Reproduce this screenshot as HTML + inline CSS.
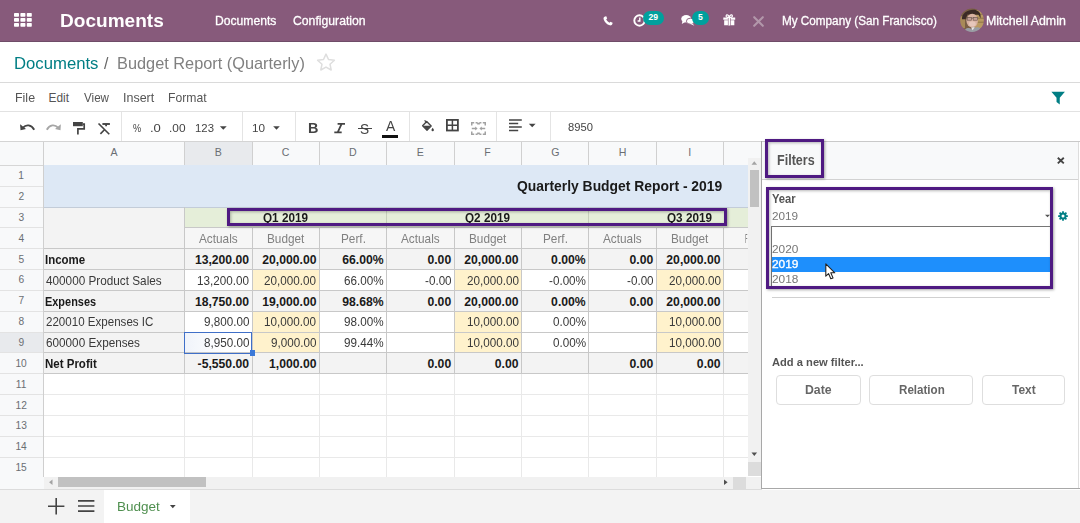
<!DOCTYPE html>
<html><head><meta charset="utf-8"><title>Documents</title>
<style>
*{box-sizing:border-box;margin:0;padding:0}
html,body{width:1080px;height:523px;overflow:hidden;background:#fff;font-family:"Liberation Sans",sans-serif;}
body{position:relative}
.a{position:absolute}
.t{position:absolute;white-space:nowrap;line-height:1;transform-origin:0 0}
.hl{position:absolute;border:3px solid #4f1a82;box-shadow:1px 1px 2.5px rgba(0,0,0,.35), inset 1px 1px 3px rgba(0,0,0,.28)}
svg{position:absolute;overflow:visible}
</style></head><body>

<div class="a" style="left:0.00px;top:0.00px;width:1080.00px;height:42.00px;background:#875a7b;"></div>
<div class="a" style="left:0.00px;top:41.00px;width:1080.00px;height:1.00px;background:#6f4c68;"></div>
<svg style="left:14px;top:13px" width="18" height="14" viewBox="0 0 18 14"><g fill="#fff">
<rect x="0" y="0" width="5" height="3.8" rx=".7"/><rect x="6.4" y="0" width="5" height="3.8" rx=".7"/><rect x="12.8" y="0" width="5" height="3.8" rx=".7"/>
<rect x="0" y="5" width="5" height="3.8" rx=".7"/><rect x="6.4" y="5" width="5" height="3.8" rx=".7"/><rect x="12.8" y="5" width="5" height="3.8" rx=".7"/>
<rect x="0" y="10" width="5" height="3.8" rx=".7"/><rect x="6.4" y="10" width="5" height="3.8" rx=".7"/><rect x="12.8" y="10" width="5" height="3.8" rx=".7"/></g></svg>
<div class="t" style="left:59.96px;top:12.00px;font-size:18.60px;color:#fff;font-weight:bold;transform:scaleX(1.0249);">Documents</div>
<div class="t" style="left:214.50px;top:15.00px;font-size:12.50px;color:#fff;transform:scaleX(0.9717);-webkit-text-stroke:0.3px #fff;">Documents</div>
<div class="t" style="left:293.14px;top:15.00px;font-size:12.50px;color:#fff;transform:scaleX(0.9769);-webkit-text-stroke:0.3px #fff;">Configuration</div>
<div class="t" style="left:781.53px;top:15.00px;font-size:12.50px;color:#fff;transform:scaleX(0.9371);-webkit-text-stroke:0.3px #fff;">My Company (San Francisco)</div>
<div class="t" style="left:985.98px;top:15.00px;font-size:12.50px;color:#fff;transform:scaleX(0.9905);-webkit-text-stroke:0.3px #fff;">Mitchell Admin</div>
<svg style="left:603px;top:15.5px" width="10" height="10" viewBox="0 0 11 11"><path d="M2.2 0.6 L3.6 0.3 L4.6 2.8 L3.5 3.7 C4.1 5.2 5.6 6.8 7.2 7.5 L8.1 6.4 L10.6 7.4 L10.3 8.9 C9.9 10.2 8.6 10.6 7.4 10.2 C4.2 9.2 1.6 6.6 0.7 3.5 C0.3 2.2 0.9 1 2.2 0.6Z" fill="#fff"/></svg>
<svg style="left:633px;top:13.5px" width="13" height="13" viewBox="0 0 13 13"><circle cx="6.5" cy="6.5" r="5.2" fill="none" stroke="#fff" stroke-width="1.9"/><path d="M6.8 3.6 V7 H4.6" fill="none" stroke="#fff" stroke-width="1.4"/></svg>
<div class="a" style="left:642.5px;top:11px;width:21.5px;height:13.5px;border-radius:7px;background:#00a09d"></div>
<div class="t" style="left:648.53px;top:13.00px;font-size:8.60px;color:#fff;font-weight:bold;">29</div>
<svg style="left:681px;top:15px" width="14" height="11" viewBox="0 0 14 11"><ellipse cx="5.2" cy="3.8" rx="5" ry="3.7" fill="#fff"/><path d="M1.6 5.6 L0.8 9 L4.6 6.8Z" fill="#fff"/><ellipse cx="9.4" cy="6.2" rx="4" ry="3" fill="#fff" stroke="#875a7b" stroke-width=".9"/><path d="M11 8 L13.4 10.8 L9 8.8Z" fill="#fff"/></svg>
<div class="a" style="left:691.8px;top:11px;width:17.4px;height:13.5px;border-radius:7px;background:#00a09d"></div>
<div class="t" style="left:698.09px;top:13.00px;font-size:8.60px;color:#fff;font-weight:bold;">5</div>
<svg style="left:722.5px;top:14px" width="12.5" height="11.5" viewBox="0 0 13 12"><path d="M0.3 3.6 H12.7 V6 H0.3Z M1.2 6.6 H11.8 V11.8 H1.2Z" fill="#fff"/><rect x="5.1" y="3.4" width="2.8" height="8.6" fill="#875a7b"/><rect x="5.7" y="3.4" width="1.6" height="8.6" fill="#fff"/><path d="M6.5 3.6 C4 3.6 2.8 2.8 3.3 1.5 C4 0.2 6 1.2 6.5 3.6 C7 1.2 9 0.2 9.7 1.5 C10.2 2.8 9 3.6 6.5 3.6Z" fill="none" stroke="#fff" stroke-width="1.2"/></svg>
<svg style="left:753px;top:16px" width="11" height="11" viewBox="0 0 11 11"><path d="M1.2 1.2 L9.8 9.8 M9.8 1.2 L1.2 9.8" stroke="#b297aa" stroke-width="2.1" stroke-linecap="round"/></svg>
<svg style="left:960px;top:8px" width="24" height="24.4" viewBox="0 0 24 24"><defs><clipPath id="av"><circle cx="12" cy="12" r="11.8"/></clipPath><filter id="bl" x="-20%" y="-20%" width="140%" height="140%"><feGaussianBlur stdDeviation="0.7"/></filter></defs><g clip-path="url(#av)"><g filter="url(#bl)">
<rect x="-2" y="-2" width="28" height="28" fill="#7a5f45"/>
<rect x="15" y="2" width="11" height="18" fill="#b99a62"/><rect x="-2" y="8" width="7" height="12" fill="#a88a58"/>
<path d="M15 6 H26 M15 10 H26 M15 14 H26" stroke="#8f7447" stroke-width="1"/>
<path d="M2 11 C1 0 23 -3 20.5 10 L18.5 6.6 L7.4 6.2 L5.6 11Z" fill="#3a2c27"/>
<ellipse cx="12.2" cy="12.4" rx="5.8" ry="6.8" fill="#d8b2a2"/>
<ellipse cx="12.4" cy="15.6" rx="3.4" ry="2.6" fill="#e6c7bb"/>
<path d="M6.6 9.9 H17.8" stroke="#6a5550" stroke-width="0.8"/>
<rect x="7.2" y="9.4" width="4.2" height="2.6" fill="#c3a095" stroke="#6a5550" stroke-width=".6"/><rect x="13.2" y="9.4" width="4.2" height="2.6" fill="#c3a095" stroke="#6a5550" stroke-width=".6"/>
<path d="M4 25 C5 18 9.5 19.4 12.4 21 C15 18.6 21 17 23 25Z" fill="#9a9da4"/>
<path d="M11 19.4 L12.6 22 L15 18.8Z" fill="#e8e8ea"/>
</g></g></svg>
<div class="a" style="left:0.00px;top:82.00px;width:1080.00px;height:1.00px;background:#dadada;"></div>
<div class="t" style="left:14.12px;top:55.00px;font-size:17.00px;color:#017e84;transform:scaleX(0.9824);">Documents</div>
<div class="t" style="left:104.00px;top:55.00px;font-size:17.00px;color:#666;transform:scaleX(0.9327);">/</div>
<div class="t" style="left:116.65px;top:55.00px;font-size:17.00px;color:#808080;transform:scaleX(0.9603);">Budget Report (Quarterly)</div>
<svg style="left:316.4px;top:51.6px" width="20" height="20" viewBox="0 0 20 19"><path d="M10 1.6 L12.5 7 L18.4 7.7 L14 11.7 L15.2 17.5 L10 14.6 L4.8 17.5 L6 11.7 L1.6 7.7 L7.5 7Z" fill="none" stroke="#dedede" stroke-width="1.5" stroke-linejoin="round"/></svg>
<div class="a" style="left:0.00px;top:111.00px;width:1080.00px;height:1.00px;background:#e2e2e2;"></div>
<div class="t" style="left:15.47px;top:93.00px;font-size:11.90px;color:#555;transform:scaleX(1.0469);">File</div>
<div class="t" style="left:48.51px;top:93.00px;font-size:11.90px;color:#555;">Edit</div>
<div class="t" style="left:84.19px;top:93.00px;font-size:11.90px;color:#555;transform:scaleX(0.9783);">View</div>
<div class="t" style="left:123.09px;top:93.00px;font-size:11.90px;color:#555;transform:scaleX(1.0504);">Insert</div>
<div class="t" style="left:168.24px;top:93.00px;font-size:11.90px;color:#555;transform:scaleX(1.0240);">Format</div>
<svg style="left:1051.2px;top:91.2px" width="14.3" height="14.2" viewBox="0 0 15 14"><path d="M0.4 0.3 H14.6 L9.2 6.6 V13.7 L5.8 11.2 V6.6Z" fill="#017e84"/></svg>
<div class="a" style="left:0.00px;top:140.50px;width:1080.00px;height:1.00px;background:#d4d4d4;"></div>
<div class="a" style="left:121.20px;top:112.00px;width:1.00px;height:29.00px;background:#e4e4e4;"></div>
<div class="a" style="left:241.50px;top:112.00px;width:1.00px;height:29.00px;background:#e4e4e4;"></div>
<div class="a" style="left:294.50px;top:112.00px;width:1.00px;height:29.00px;background:#e4e4e4;"></div>
<div class="a" style="left:408.70px;top:112.00px;width:1.00px;height:29.00px;background:#e4e4e4;"></div>
<div class="a" style="left:496.20px;top:112.00px;width:1.00px;height:29.00px;background:#e4e4e4;"></div>
<div class="a" style="left:549.50px;top:112.00px;width:1.00px;height:29.00px;background:#e4e4e4;"></div>
<svg style="left:19.6px;top:124.4px" width="15" height="6.8" viewBox="0 0 15 6.8"><path d="M3 3.6 C6 0.2 11.4 0.4 14.2 5.8" fill="none" stroke="#444" stroke-width="1.9"/><path d="M0.1 0.2 L0.5 6.2 L6 5Z" fill="#444"/></svg>
<svg style="left:46px;top:124.4px" width="15" height="6.8" viewBox="0 0 15 6.8"><path d="M12 3.6 C9 0.2 3.6 0.4 0.8 5.8" fill="none" stroke="#a6a6a6" stroke-width="1.9"/><path d="M14.9 0.2 L14.5 6.2 L9 5Z" fill="#a6a6a6"/></svg>
<svg style="left:73px;top:121.6px" width="12" height="12.6" viewBox="0 0 12 12.6"><rect x="0" y="0" width="9.8" height="4.2" fill="#444"/><path d="M9.8 2.1 H11.2 V6.8 H4.9 V12.4" fill="none" stroke="#444" stroke-width="1.7"/></svg>
<svg style="left:97.6px;top:122.6px" width="12.5" height="11.6" viewBox="0 0 12.5 11.6"><path d="M4.4 1 H11.9" stroke="#444" stroke-width="1.9"/><path d="M8.1 1 V3.2" stroke="#444" stroke-width="1.8"/><path d="M0.5 0.5 L11.3 11.3 M2.4 10.9 L6.9 6.2" fill="none" stroke="#444" stroke-width="1.6"/></svg>
<div class="t" style="left:132.98px;top:123.00px;font-size:11.00px;color:#444;transform:scaleX(0.8315);">%</div>
<div class="t" style="left:149.63px;top:123.00px;font-size:11.30px;color:#444;transform:scaleX(1.1548);">.0</div>
<div class="t" style="left:168.93px;top:123.00px;font-size:11.30px;color:#444;transform:scaleX(1.0514);">.00</div>
<div class="t" style="left:195.35px;top:123.00px;font-size:11.30px;color:#444;transform:scaleX(1.0049);">123</div>
<svg class="a" style="left:0;top:0" width="1080" height="523"><polygon points="219.9,126.3 226.70000000000002,126.3 223.3,129.7" fill="#444"/></svg>
<div class="t" style="left:252.12px;top:123.00px;font-size:11.30px;color:#444;transform:scaleX(1.0380);">10</div>
<svg class="a" style="left:0;top:0" width="1080" height="523"><polygon points="273.2,126.3 279.8,126.3 276.5,129.7" fill="#444"/></svg>
<div class="t" style="left:307.73px;top:121.00px;font-size:14.60px;color:#444;font-weight:bold;transform:scaleX(0.9881);">B</div>
<svg style="left:333.7px;top:122.7px" width="11.3" height="10.3" viewBox="0 0 11.3 10.3"><path d="M3.6 0.9 H11 M0.3 9.4 H7.7 M7.6 0.9 L3.7 9.4" stroke="#444" stroke-width="1.8" fill="none"/></svg>
<div class="t" style="left:360.18px;top:121.00px;font-size:15.20px;color:#444;transform:scaleX(0.9000);">S</div>
<div class="a" style="left:358.30px;top:127.60px;width:13.40px;height:1.40px;background:#444;"></div>
<div class="t" style="left:385.77px;top:119.00px;font-size:14.60px;color:#444;transform:scaleX(0.9512);">A</div>
<div class="a" style="left:382.20px;top:134.70px;width:15.80px;height:3.30px;background:#111;"></div>
<svg style="left:421.5px;top:120.3px" width="12" height="11.2" viewBox="0 0 12 11.2"><path d="M4.7 1.5 L9.2 6 L5 10.2 L0.6 5.8Z" fill="#f4f4f4" stroke="#444" stroke-width="1.3" stroke-linejoin="round"/><path d="M1.2 5.8 H8.8 L5 9.8Z" fill="#444"/><path d="M2.6 0.4 L4.9 2.7" stroke="#444" stroke-width="1.3"/><path d="M10.7 7.8 C11.4 8.8 11.9 9.4 11.9 10 A1.2 1.2 0 0 1 9.5 10 C9.5 9.4 10 8.8 10.7 7.8Z" fill="#444"/></svg>
<svg style="left:446.2px;top:119.3px" width="12.8" height="12.4" viewBox="0 0 12.8 12.4"><rect x="0.9" y="0.9" width="11" height="10.6" fill="none" stroke="#444" stroke-width="1.8"/><path d="M6.4 0.9 V11.5 M0.9 6.2 H11.9" stroke="#444" stroke-width="1.5"/></svg>
<svg style="left:470.8px;top:121.7px" width="15" height="13" viewBox="0 0 15 13"><g fill="none" stroke="#a2a2a2" stroke-width="1.5"><path d="M0.75 3.4 V0.75 H3.2 M4.6 0.75 H6.6 M8.4 0.75 H10.4 M11.8 0.75 H14.25 V3.4 M0.75 9.6 V12.25 H3.2 M4.6 12.25 H6.6 M8.4 12.25 H10.4 M11.8 12.25 H14.25 V9.6 M6.9 0.75 V2.6 M8.1 0.75 V2.6 M6.9 12.25 V10.4 M8.1 12.25 V10.4"/><path d="M0.8 6.5 H5.4 M9.6 6.5 H14.2"/></g><path d="M4.2 4.5 L6.6 6.5 L4.2 8.5Z M10.8 4.5 L8.4 6.5 L10.8 8.5Z" fill="#a2a2a2"/></svg>
<svg style="left:509.2px;top:119.3px" width="12.8" height="12.6" viewBox="0 0 12.8 12.6"><path d="M0 1 H12.8 M0 4.5 H9.2 M0 8 H12.8 M0 11.5 H9.2" stroke="#444" stroke-width="1.7"/></svg>
<svg class="a" style="left:0;top:0" width="1080" height="523"><polygon points="528.8000000000001,123.8 535.6,123.8 532.2,127.2" fill="#444"/></svg>
<div class="t" style="left:567.52px;top:122.00px;font-size:10.90px;color:#444;transform:scaleX(1.0277);">8950</div>
<div class="a" style="left:0.00px;top:141.50px;width:761.00px;height:23.80px;background:#f8f9fa;"></div>
<div class="a" style="left:0.00px;top:165.30px;width:43.50px;height:311.40px;background:#f8f9fa;"></div>
<div class="a" style="left:184.70px;top:141.50px;width:67.35px;height:23.80px;background:#e8eaed;"></div>
<div class="a" style="left:0.00px;top:332.10px;width:43.50px;height:20.85px;background:#e8eaed;"></div>
<div class="a" style="left:43.00px;top:141.50px;width:1.00px;height:23.80px;background:#d0d0d0;"></div>
<div class="a" style="left:184.20px;top:141.50px;width:1.00px;height:23.80px;background:#d0d0d0;"></div>
<div class="a" style="left:251.55px;top:141.50px;width:1.00px;height:23.80px;background:#d0d0d0;"></div>
<div class="a" style="left:318.90px;top:141.50px;width:1.00px;height:23.80px;background:#d0d0d0;"></div>
<div class="a" style="left:386.25px;top:141.50px;width:1.00px;height:23.80px;background:#d0d0d0;"></div>
<div class="a" style="left:453.60px;top:141.50px;width:1.00px;height:23.80px;background:#d0d0d0;"></div>
<div class="a" style="left:520.95px;top:141.50px;width:1.00px;height:23.80px;background:#d0d0d0;"></div>
<div class="a" style="left:588.30px;top:141.50px;width:1.00px;height:23.80px;background:#d0d0d0;"></div>
<div class="a" style="left:655.65px;top:141.50px;width:1.00px;height:23.80px;background:#d0d0d0;"></div>
<div class="a" style="left:723.00px;top:141.50px;width:1.00px;height:23.80px;background:#d0d0d0;"></div>
<div class="a" style="left:790.35px;top:141.50px;width:1.00px;height:23.80px;background:#d0d0d0;"></div>
<div class="a" style="left:0.00px;top:185.65px;width:43.50px;height:1.00px;background:#e3e3e3;"></div>
<div class="a" style="left:0.00px;top:206.50px;width:43.50px;height:1.00px;background:#e3e3e3;"></div>
<div class="a" style="left:0.00px;top:227.35px;width:43.50px;height:1.00px;background:#e3e3e3;"></div>
<div class="a" style="left:0.00px;top:248.20px;width:43.50px;height:1.00px;background:#e3e3e3;"></div>
<div class="a" style="left:0.00px;top:269.05px;width:43.50px;height:1.00px;background:#e3e3e3;"></div>
<div class="a" style="left:0.00px;top:289.90px;width:43.50px;height:1.00px;background:#e3e3e3;"></div>
<div class="a" style="left:0.00px;top:310.75px;width:43.50px;height:1.00px;background:#e3e3e3;"></div>
<div class="a" style="left:0.00px;top:331.60px;width:43.50px;height:1.00px;background:#e3e3e3;"></div>
<div class="a" style="left:0.00px;top:352.45px;width:43.50px;height:1.00px;background:#e3e3e3;"></div>
<div class="a" style="left:0.00px;top:373.30px;width:43.50px;height:1.00px;background:#e3e3e3;"></div>
<div class="a" style="left:0.00px;top:394.15px;width:43.50px;height:1.00px;background:#e3e3e3;"></div>
<div class="a" style="left:0.00px;top:415.00px;width:43.50px;height:1.00px;background:#e3e3e3;"></div>
<div class="a" style="left:0.00px;top:435.85px;width:43.50px;height:1.00px;background:#e3e3e3;"></div>
<div class="a" style="left:0.00px;top:456.70px;width:43.50px;height:1.00px;background:#e3e3e3;"></div>
<div class="a" style="left:0.00px;top:477.55px;width:43.50px;height:1.00px;background:#e3e3e3;"></div>
<div class="a" style="left:0.00px;top:164.80px;width:748.00px;height:1.00px;background:#d6d6d6;"></div>
<div class="a" style="left:43.00px;top:165.30px;width:1.00px;height:311.40px;background:#cfcfcf;"></div>
<div class="t" style="left:110.56px;top:147.00px;font-size:10.60px;color:#6a6e73;">A</div>
<div class="t" style="left:214.68px;top:147.00px;font-size:10.60px;color:#6a6e73;">B</div>
<div class="t" style="left:281.83px;top:147.00px;font-size:10.60px;color:#6a6e73;">C</div>
<div class="t" style="left:349.06px;top:147.00px;font-size:10.60px;color:#6a6e73;">D</div>
<div class="t" style="left:416.68px;top:147.00px;font-size:10.60px;color:#6a6e73;">E</div>
<div class="t" style="left:484.30px;top:147.00px;font-size:10.60px;color:#6a6e73;">F</div>
<div class="t" style="left:551.14px;top:147.00px;font-size:10.60px;color:#6a6e73;">G</div>
<div class="t" style="left:618.65px;top:147.00px;font-size:10.60px;color:#6a6e73;">H</div>
<div class="t" style="left:688.35px;top:147.00px;font-size:10.60px;color:#6a6e73;">I</div>
<div class="t" style="left:18.33px;top:171.00px;font-size:10.20px;color:#6a6e73;">1</div>
<div class="t" style="left:18.46px;top:192.00px;font-size:10.20px;color:#6a6e73;">2</div>
<div class="t" style="left:18.50px;top:213.00px;font-size:10.20px;color:#6a6e73;">3</div>
<div class="t" style="left:18.49px;top:234.00px;font-size:10.20px;color:#6a6e73;">4</div>
<div class="t" style="left:18.47px;top:255.00px;font-size:10.20px;color:#6a6e73;">5</div>
<div class="t" style="left:18.43px;top:275.00px;font-size:10.20px;color:#6a6e73;">6</div>
<div class="t" style="left:18.46px;top:296.00px;font-size:10.20px;color:#6a6e73;">7</div>
<div class="t" style="left:18.47px;top:317.00px;font-size:10.20px;color:#6a6e73;">8</div>
<div class="t" style="left:18.46px;top:338.00px;font-size:10.20px;color:#6a6e73;">9</div>
<div class="t" style="left:15.45px;top:359.00px;font-size:10.20px;color:#6a6e73;">10</div>
<div class="t" style="left:15.87px;top:380.00px;font-size:10.20px;color:#6a6e73;">11</div>
<div class="t" style="left:15.50px;top:401.00px;font-size:10.20px;color:#6a6e73;">12</div>
<div class="t" style="left:15.47px;top:421.00px;font-size:10.20px;color:#6a6e73;">13</div>
<div class="t" style="left:15.40px;top:442.00px;font-size:10.20px;color:#6a6e73;">14</div>
<div class="t" style="left:15.46px;top:463.00px;font-size:10.20px;color:#6a6e73;">15</div>
<div class="a" style="left:184.20px;top:165.30px;width:1.00px;height:311.40px;background:#e9e9e9;"></div>
<div class="a" style="left:251.55px;top:165.30px;width:1.00px;height:311.40px;background:#e9e9e9;"></div>
<div class="a" style="left:318.90px;top:165.30px;width:1.00px;height:311.40px;background:#e9e9e9;"></div>
<div class="a" style="left:386.25px;top:165.30px;width:1.00px;height:311.40px;background:#e9e9e9;"></div>
<div class="a" style="left:453.60px;top:165.30px;width:1.00px;height:311.40px;background:#e9e9e9;"></div>
<div class="a" style="left:520.95px;top:165.30px;width:1.00px;height:311.40px;background:#e9e9e9;"></div>
<div class="a" style="left:588.30px;top:165.30px;width:1.00px;height:311.40px;background:#e9e9e9;"></div>
<div class="a" style="left:655.65px;top:165.30px;width:1.00px;height:311.40px;background:#e9e9e9;"></div>
<div class="a" style="left:723.00px;top:165.30px;width:1.00px;height:311.40px;background:#e9e9e9;"></div>
<div class="a" style="left:790.35px;top:165.30px;width:1.00px;height:311.40px;background:#e9e9e9;"></div>
<div class="a" style="left:43.50px;top:185.65px;width:704.50px;height:1.00px;background:#e9e9e9;"></div>
<div class="a" style="left:43.50px;top:206.50px;width:704.50px;height:1.00px;background:#e9e9e9;"></div>
<div class="a" style="left:43.50px;top:227.35px;width:704.50px;height:1.00px;background:#e9e9e9;"></div>
<div class="a" style="left:43.50px;top:248.20px;width:704.50px;height:1.00px;background:#e9e9e9;"></div>
<div class="a" style="left:43.50px;top:269.05px;width:704.50px;height:1.00px;background:#e9e9e9;"></div>
<div class="a" style="left:43.50px;top:289.90px;width:704.50px;height:1.00px;background:#e9e9e9;"></div>
<div class="a" style="left:43.50px;top:310.75px;width:704.50px;height:1.00px;background:#e9e9e9;"></div>
<div class="a" style="left:43.50px;top:331.60px;width:704.50px;height:1.00px;background:#e9e9e9;"></div>
<div class="a" style="left:43.50px;top:352.45px;width:704.50px;height:1.00px;background:#e9e9e9;"></div>
<div class="a" style="left:43.50px;top:373.30px;width:704.50px;height:1.00px;background:#e9e9e9;"></div>
<div class="a" style="left:43.50px;top:394.15px;width:704.50px;height:1.00px;background:#e9e9e9;"></div>
<div class="a" style="left:43.50px;top:415.00px;width:704.50px;height:1.00px;background:#e9e9e9;"></div>
<div class="a" style="left:43.50px;top:435.85px;width:704.50px;height:1.00px;background:#e9e9e9;"></div>
<div class="a" style="left:43.50px;top:456.70px;width:704.50px;height:1.00px;background:#e9e9e9;"></div>
<div class="a" style="left:43.50px;top:477.55px;width:704.50px;height:1.00px;background:#e9e9e9;"></div>
<div class="a" style="left:43.50px;top:165.30px;width:704.50px;height:41.70px;background:#dde8f5;"></div>
<div class="a" style="left:43.50px;top:207.00px;width:141.20px;height:41.70px;background:#f3f3f3;"></div>
<div class="a" style="left:184.70px;top:207.00px;width:563.30px;height:20.85px;background:#e5eed9;"></div>
<div class="a" style="left:184.70px;top:227.85px;width:563.30px;height:20.85px;background:#f6f6f6;"></div>
<div class="a" style="left:43.50px;top:248.70px;width:704.50px;height:20.85px;background:#f3f3f3;"></div>
<div class="a" style="left:43.50px;top:290.40px;width:704.50px;height:20.85px;background:#f3f3f3;"></div>
<div class="a" style="left:43.50px;top:352.95px;width:704.50px;height:20.85px;background:#f3f3f3;"></div>
<div class="a" style="left:43.50px;top:269.55px;width:141.20px;height:20.85px;background:#f3f3f3;"></div>
<div class="a" style="left:252.05px;top:269.55px;width:67.35px;height:20.85px;background:#fff2cc;"></div>
<div class="a" style="left:454.10px;top:269.55px;width:67.35px;height:20.85px;background:#fff2cc;"></div>
<div class="a" style="left:656.15px;top:269.55px;width:67.35px;height:20.85px;background:#fff2cc;"></div>
<div class="a" style="left:43.50px;top:311.25px;width:141.20px;height:20.85px;background:#f3f3f3;"></div>
<div class="a" style="left:252.05px;top:311.25px;width:67.35px;height:20.85px;background:#fff2cc;"></div>
<div class="a" style="left:454.10px;top:311.25px;width:67.35px;height:20.85px;background:#fff2cc;"></div>
<div class="a" style="left:656.15px;top:311.25px;width:67.35px;height:20.85px;background:#fff2cc;"></div>
<div class="a" style="left:43.50px;top:332.10px;width:141.20px;height:20.85px;background:#f3f3f3;"></div>
<div class="a" style="left:252.05px;top:332.10px;width:67.35px;height:20.85px;background:#fff2cc;"></div>
<div class="a" style="left:454.10px;top:332.10px;width:67.35px;height:20.85px;background:#fff2cc;"></div>
<div class="a" style="left:656.15px;top:332.10px;width:67.35px;height:20.85px;background:#fff2cc;"></div>
<div class="a" style="left:43.50px;top:206.50px;width:704.50px;height:1.00px;background:#c3ccd8;"></div>
<div class="a" style="left:184.70px;top:227.35px;width:563.30px;height:1.00px;background:#c8c8c8;"></div>
<div class="a" style="left:43.50px;top:248.20px;width:704.50px;height:1.00px;background:#c8c8c8;"></div>
<div class="a" style="left:43.50px;top:269.05px;width:704.50px;height:1.00px;background:#c8c8c8;"></div>
<div class="a" style="left:43.50px;top:289.90px;width:704.50px;height:1.00px;background:#c8c8c8;"></div>
<div class="a" style="left:43.50px;top:310.75px;width:704.50px;height:1.00px;background:#c8c8c8;"></div>
<div class="a" style="left:43.50px;top:331.60px;width:704.50px;height:1.00px;background:#c8c8c8;"></div>
<div class="a" style="left:43.50px;top:352.45px;width:704.50px;height:1.00px;background:#c8c8c8;"></div>
<div class="a" style="left:43.50px;top:373.30px;width:704.50px;height:1.00px;background:#c8c8c8;"></div>
<div class="a" style="left:184.20px;top:207.00px;width:1.00px;height:166.80px;background:#c8c8c8;"></div>
<div class="a" style="left:251.55px;top:227.85px;width:1.00px;height:145.95px;background:#c8c8c8;"></div>
<div class="a" style="left:318.90px;top:227.85px;width:1.00px;height:145.95px;background:#c8c8c8;"></div>
<div class="a" style="left:386.25px;top:227.85px;width:1.00px;height:145.95px;background:#c8c8c8;"></div>
<div class="a" style="left:453.60px;top:227.85px;width:1.00px;height:145.95px;background:#c8c8c8;"></div>
<div class="a" style="left:520.95px;top:227.85px;width:1.00px;height:145.95px;background:#c8c8c8;"></div>
<div class="a" style="left:588.30px;top:227.85px;width:1.00px;height:145.95px;background:#c8c8c8;"></div>
<div class="a" style="left:655.65px;top:227.85px;width:1.00px;height:145.95px;background:#c8c8c8;"></div>
<div class="a" style="left:723.00px;top:227.85px;width:1.00px;height:145.95px;background:#c8c8c8;"></div>
<div class="a" style="left:386.25px;top:207.00px;width:1.00px;height:20.85px;background:#c8d1bd;"></div>
<div class="a" style="left:588.30px;top:207.00px;width:1.00px;height:20.85px;background:#c8d1bd;"></div>
<div class="t" style="left:516.74px;top:178.00px;font-size:15.00px;color:#1a1a1a;font-weight:bold;transform:scaleX(0.9258);">Quarterly Budget Report - 2019</div>
<div class="t" style="left:262.92px;top:213.00px;font-size:11.90px;color:#1a1a1a;font-weight:bold;transform:scaleX(0.9850);">Q1 2019</div>
<div class="t" style="left:464.97px;top:213.00px;font-size:11.90px;color:#1a1a1a;font-weight:bold;transform:scaleX(0.9850);">Q2 2019</div>
<div class="t" style="left:667.02px;top:213.00px;font-size:11.90px;color:#1a1a1a;font-weight:bold;transform:scaleX(0.9850);">Q3 2019</div>
<div class="t" style="left:199.22px;top:233.00px;font-size:12.10px;color:#808080;transform:scaleX(0.9750);">Actuals</div>
<div class="t" style="left:266.58px;top:233.00px;font-size:12.10px;color:#808080;transform:scaleX(0.9750);">Budget</div>
<div class="t" style="left:340.66px;top:233.00px;font-size:12.10px;color:#808080;transform:scaleX(0.9750);">Perf.</div>
<div class="t" style="left:401.27px;top:233.00px;font-size:12.10px;color:#808080;transform:scaleX(0.9750);">Actuals</div>
<div class="t" style="left:468.63px;top:233.00px;font-size:12.10px;color:#808080;transform:scaleX(0.9750);">Budget</div>
<div class="t" style="left:542.71px;top:233.00px;font-size:12.10px;color:#808080;transform:scaleX(0.9750);">Perf.</div>
<div class="t" style="left:603.32px;top:233.00px;font-size:12.10px;color:#808080;transform:scaleX(0.9750);">Actuals</div>
<div class="t" style="left:670.68px;top:233.00px;font-size:12.10px;color:#808080;transform:scaleX(0.9750);">Budget</div>
<div class="t" style="left:744.85px;top:233.00px;font-size:12.10px;color:#808080;transform:scaleX(0.4554);clip-path:inset(0 2.5px 0 0);">F</div>
<div class="t" style="left:45.32px;top:254.00px;font-size:12.20px;color:#1a1a1a;font-weight:bold;transform:scaleX(0.9426);">Income</div>
<div class="t" style="left:194.88px;top:254.00px;font-size:12.20px;color:#1a1a1a;font-weight:bold;">13,200.00</div>
<div class="t" style="left:262.23px;top:254.00px;font-size:12.20px;color:#1a1a1a;font-weight:bold;">20,000.00</div>
<div class="t" style="left:342.30px;top:254.00px;font-size:12.20px;color:#1a1a1a;font-weight:bold;">66.00%</div>
<div class="t" style="left:427.46px;top:254.00px;font-size:12.20px;color:#1a1a1a;font-weight:bold;">0.00</div>
<div class="t" style="left:464.28px;top:254.00px;font-size:12.20px;color:#1a1a1a;font-weight:bold;">20,000.00</div>
<div class="t" style="left:551.12px;top:254.00px;font-size:12.20px;color:#1a1a1a;font-weight:bold;">0.00%</div>
<div class="t" style="left:629.51px;top:254.00px;font-size:12.20px;color:#1a1a1a;font-weight:bold;">0.00</div>
<div class="t" style="left:666.33px;top:254.00px;font-size:12.20px;color:#1a1a1a;font-weight:bold;">20,000.00</div>
<div class="t" style="left:45.84px;top:275.00px;font-size:12.20px;color:#3a3a3a;transform:scaleX(0.9644);">400000 Product Sales</div>
<div class="t" style="left:197.11px;top:275.00px;font-size:12.20px;color:#3a3a3a;transform:scaleX(0.9580);">13,200.00</div>
<div class="t" style="left:264.46px;top:275.00px;font-size:12.20px;color:#3a3a3a;transform:scaleX(0.9580);">20,000.00</div>
<div class="t" style="left:344.11px;top:275.00px;font-size:12.20px;color:#3a3a3a;transform:scaleX(0.9580);">66.00%</div>
<div class="t" style="left:424.52px;top:275.00px;font-size:12.20px;color:#3a3a3a;transform:scaleX(0.9580);">-0.00</div>
<div class="t" style="left:466.51px;top:275.00px;font-size:12.20px;color:#3a3a3a;transform:scaleX(0.9580);">20,000.00</div>
<div class="t" style="left:548.76px;top:275.00px;font-size:12.20px;color:#3a3a3a;transform:scaleX(0.9580);">-0.00%</div>
<div class="t" style="left:626.57px;top:275.00px;font-size:12.20px;color:#3a3a3a;transform:scaleX(0.9580);">-0.00</div>
<div class="t" style="left:668.56px;top:275.00px;font-size:12.20px;color:#3a3a3a;transform:scaleX(0.9580);">20,000.00</div>
<div class="t" style="left:45.36px;top:296.00px;font-size:12.20px;color:#1a1a1a;font-weight:bold;transform:scaleX(0.8970);">Expenses</div>
<div class="t" style="left:194.88px;top:296.00px;font-size:12.20px;color:#1a1a1a;font-weight:bold;">18,750.00</div>
<div class="t" style="left:262.23px;top:296.00px;font-size:12.20px;color:#1a1a1a;font-weight:bold;">19,000.00</div>
<div class="t" style="left:342.30px;top:296.00px;font-size:12.20px;color:#1a1a1a;font-weight:bold;">98.68%</div>
<div class="t" style="left:427.46px;top:296.00px;font-size:12.20px;color:#1a1a1a;font-weight:bold;">0.00</div>
<div class="t" style="left:464.28px;top:296.00px;font-size:12.20px;color:#1a1a1a;font-weight:bold;">20,000.00</div>
<div class="t" style="left:551.12px;top:296.00px;font-size:12.20px;color:#1a1a1a;font-weight:bold;">0.00%</div>
<div class="t" style="left:629.51px;top:296.00px;font-size:12.20px;color:#1a1a1a;font-weight:bold;">0.00</div>
<div class="t" style="left:666.33px;top:296.00px;font-size:12.20px;color:#1a1a1a;font-weight:bold;">20,000.00</div>
<div class="t" style="left:45.52px;top:316.00px;font-size:12.20px;color:#3a3a3a;transform:scaleX(0.9491);">220010 Expenses IC</div>
<div class="t" style="left:203.59px;top:316.00px;font-size:12.20px;color:#3a3a3a;transform:scaleX(0.9580);">9,800.00</div>
<div class="t" style="left:264.46px;top:316.00px;font-size:12.20px;color:#3a3a3a;transform:scaleX(0.9580);">10,000.00</div>
<div class="t" style="left:344.11px;top:316.00px;font-size:12.20px;color:#3a3a3a;transform:scaleX(0.9580);">98.00%</div>
<div class="t" style="left:466.51px;top:316.00px;font-size:12.20px;color:#3a3a3a;transform:scaleX(0.9580);">10,000.00</div>
<div class="t" style="left:552.65px;top:316.00px;font-size:12.20px;color:#3a3a3a;transform:scaleX(0.9580);">0.00%</div>
<div class="t" style="left:668.56px;top:316.00px;font-size:12.20px;color:#3a3a3a;transform:scaleX(0.9580);">10,000.00</div>
<div class="t" style="left:45.51px;top:337.00px;font-size:12.20px;color:#3a3a3a;transform:scaleX(0.9632);">600000 Expenses</div>
<div class="t" style="left:203.59px;top:337.00px;font-size:12.20px;color:#3a3a3a;transform:scaleX(0.9580);">8,950.00</div>
<div class="t" style="left:270.94px;top:337.00px;font-size:12.20px;color:#3a3a3a;transform:scaleX(0.9580);">9,000.00</div>
<div class="t" style="left:344.11px;top:337.00px;font-size:12.20px;color:#3a3a3a;transform:scaleX(0.9580);">99.44%</div>
<div class="t" style="left:466.51px;top:337.00px;font-size:12.20px;color:#3a3a3a;transform:scaleX(0.9580);">10,000.00</div>
<div class="t" style="left:552.65px;top:337.00px;font-size:12.20px;color:#3a3a3a;transform:scaleX(0.9580);">0.00%</div>
<div class="t" style="left:668.56px;top:337.00px;font-size:12.20px;color:#3a3a3a;transform:scaleX(0.9580);">10,000.00</div>
<div class="t" style="left:45.32px;top:358.00px;font-size:12.20px;color:#1a1a1a;font-weight:bold;transform:scaleX(0.9434);">Net Profit</div>
<div class="t" style="left:197.59px;top:358.00px;font-size:12.20px;color:#1a1a1a;font-weight:bold;">-5,550.00</div>
<div class="t" style="left:269.00px;top:358.00px;font-size:12.20px;color:#1a1a1a;font-weight:bold;">1,000.00</div>
<div class="t" style="left:427.46px;top:358.00px;font-size:12.20px;color:#1a1a1a;font-weight:bold;">0.00</div>
<div class="t" style="left:494.81px;top:358.00px;font-size:12.20px;color:#1a1a1a;font-weight:bold;">0.00</div>
<div class="t" style="left:629.51px;top:358.00px;font-size:12.20px;color:#1a1a1a;font-weight:bold;">0.00</div>
<div class="t" style="left:696.86px;top:358.00px;font-size:12.20px;color:#1a1a1a;font-weight:bold;">0.00</div>
<div class="a" style="left:184px;top:332.00px;width:68.2px;height:21.85px;border:1.4px solid #3f6fc8;background:linear-gradient(90deg,rgba(63,111,200,.08),rgba(63,111,200,0) 60%)"></div>
<div class="a" style="left:249.6px;top:349.75px;width:5.8px;height:5.8px;background:#3a78d8;"></div>
<div class="hl" style="left:227px;top:208px;width:500px;height:18px"></div>
<div class="a" style="left:748.00px;top:157.50px;width:13.50px;height:318.50px;background:#f1f1f1;"></div>
<div class="a" style="left:749.70px;top:169.50px;width:9.70px;height:37.70px;background:#c1c1c1;"></div>
<svg class="a" style="left:0;top:0" width="1080" height="523"><polygon points="751.5,164.7 757.0999999999999,164.7 754.3,161.3" fill="#a3a3a3"/></svg>
<svg class="a" style="left:0;top:0" width="1080" height="523"><polygon points="751.5,452.4 757.0999999999999,452.4 754.3,456.0" fill="#505050"/></svg>
<div class="a" style="left:748.00px;top:461.80px;width:12.80px;height:13.80px;background:#dcdcdc;"></div>
<div class="a" style="left:0.00px;top:476.70px;width:761.50px;height:12.30px;background:#f1f1f1;"></div>
<div class="a" style="left:0.00px;top:476.70px;width:43.50px;height:12.30px;background:#f8f9fa;"></div>
<div class="a" style="left:58.00px;top:476.70px;width:147.80px;height:10.70px;background:#c1c1c1;"></div>
<svg class="a" style="left:0;top:0" width="1080" height="523"><polygon points="52.5,479.4 52.5,485.0 49.099999999999994,482.2" fill="#a3a3a3"/></svg>
<svg class="a" style="left:0;top:0" width="1080" height="523"><polygon points="724.0,479.4 724.0,485.0 727.5999999999999,482.2" fill="#505050"/></svg>
<div class="a" style="left:732.70px;top:476.70px;width:13.70px;height:11.90px;background:#dcdcdc;"></div>
<div class="a" style="left:0.00px;top:488.80px;width:762.00px;height:1.00px;background:#dcdcdc;"></div>
<div class="a" style="left:0.00px;top:489.80px;width:1080.00px;height:33.20px;background:#f3f3f3;"></div>
<div class="a" style="left:103.90px;top:490.00px;width:86.00px;height:33.00px;background:#ffffff;"></div>
<svg style="left:48.3px;top:498px" width="16.4" height="16.4" viewBox="0 0 16.4 16.4"><path d="M8.2 0 V16.4 M0 8.2 H16.4" stroke="#444" stroke-width="1.6"/></svg>
<svg style="left:78.4px;top:500.4px" width="16.4" height="12" viewBox="0 0 16.4 12"><path d="M0 0.9 H16.4 M0 6 H16.4 M0 11.1 H16.4" stroke="#444" stroke-width="1.6"/></svg>
<div class="t" style="left:117.08px;top:500.00px;font-size:13.40px;color:#4f8f4f;transform:scaleX(1.0104);">Budget</div>
<svg class="a" style="left:0;top:0" width="1080" height="523"><polygon points="169.9,505.09999999999997 175.70000000000002,505.09999999999997 172.8,508.3" fill="#444"/></svg>
<div class="a" style="left:761.20px;top:140.80px;width:318.80px;height:348.40px;background:#a8a8a8;"></div>
<div class="a" style="left:762.20px;top:141.60px;width:316.20px;height:346.60px;background:#ffffff;"></div>
<div class="a" style="left:1078.40px;top:141.60px;width:1.60px;height:346.60px;background:#ffffff;"></div>
<div class="a" style="left:1077.60px;top:141.60px;width:0.90px;height:346.60px;background:#dddddd;"></div>
<div class="a" style="left:762.20px;top:141.60px;width:315.80px;height:37.80px;background:#f8f9fa;"></div>
<div class="a" style="left:762.20px;top:140.60px;width:317.80px;height:1.00px;background:#c9c9c9;"></div>
<div class="a" style="left:762.20px;top:179.40px;width:315.80px;height:1.00px;background:#d2d2d2;"></div>
<div class="t" style="left:776.75px;top:154.00px;font-size:13.90px;color:#555;font-weight:bold;transform:scaleX(0.9029);">Filters</div>
<svg style="left:1056.6px;top:157.3px" width="7.6" height="7.2" viewBox="0 0 7.6 7.2"><path d="M0.8 0.8 L6.8 6.4 M6.8 0.8 L0.8 6.4" stroke="#444" stroke-width="1.9"/></svg>
<div class="hl" style="left:765px;top:139px;width:59px;height:39px"></div>
<div class="t" style="left:771.80px;top:193.00px;font-size:12.20px;color:#555;font-weight:bold;transform:scaleX(0.9210);">Year</div>
<div class="t" style="left:772.11px;top:210.00px;font-size:11.60px;color:#777;transform:scaleX(1.0130);">2019</div>
<svg class="a" style="left:0;top:0" width="1080" height="523"><polygon points="1045.0,214.7 1050.0,214.7 1047.5,217.3" fill="#555"/></svg>
<svg style="left:1057.8px;top:211.2px" width="10" height="10" viewBox="0 0 12 12"><circle cx="6" cy="6" r="3" fill="none" stroke="#017e84" stroke-width="2.4"/><g stroke="#017e84" stroke-width="2.1"><path d="M6 0.2 V2.4 M6 9.6 V11.8 M0.2 6 H2.4 M9.6 6 H11.8 M1.9 1.9 L3.4 3.4 M8.6 8.6 L10.1 10.1 M1.9 10.1 L3.4 8.6 M8.6 3.4 L10.1 1.9"/></g></svg>
<div class="a" style="left:770.6px;top:225.6px;width:281px;height:62px;background:#fff;border:1px solid #767676"></div>
<div class="t" style="left:772.11px;top:243.00px;font-size:11.60px;color:#777;transform:scaleX(1.0216);">2020</div>
<div class="a" style="left:771.60px;top:257.00px;width:278.40px;height:14.60px;background:#1e8ffc;"></div>
<div class="t" style="left:772.11px;top:258.00px;font-size:11.60px;color:#fff;transform:scaleX(1.0252);-webkit-text-stroke:0.35px #fff;">2019</div>
<div class="t" style="left:772.11px;top:273.00px;font-size:11.60px;color:#777;transform:scaleX(1.0240);">2018</div>
<div class="a" style="left:771.50px;top:296.80px;width:278.50px;height:0.90px;background:#d0d0d0;"></div>
<div class="hl" style="left:766px;top:187px;width:287px;height:102px"></div>
<svg style="left:825px;top:262.6px" width="11" height="17" viewBox="0 0 11 17"><path d="M0.8 0.8 V13.2 L3.6 10.6 L5.8 15.8 L8 14.9 L5.8 9.8 H9.8Z" fill="#fff" stroke="#222" stroke-width="1.1" stroke-linejoin="round"/></svg>
<div class="t" style="left:771.92px;top:357.00px;font-size:11.80px;color:#555;font-weight:bold;transform:scaleX(0.9454);">Add a new filter...</div>
<div class="a" style="left:776.1px;top:374.9px;width:85.2px;height:29.8px;border:1px solid #dedede;border-radius:4px;background:#fff"></div>
<div class="t" style="left:805.17px;top:384.00px;font-size:12.60px;color:#666;font-weight:bold;transform:scaleX(0.9750);">Date</div>
<div class="a" style="left:869.3px;top:374.9px;width:104.2px;height:29.8px;border:1px solid #dedede;border-radius:4px;background:#fff"></div>
<div class="t" style="left:899.22px;top:384.00px;font-size:12.60px;color:#666;font-weight:bold;transform:scaleX(0.9210);">Relation</div>
<div class="a" style="left:982px;top:374.9px;width:82.6px;height:29.8px;border:1px solid #dedede;border-radius:4px;background:#fff"></div>
<div class="t" style="left:1011.88px;top:384.00px;font-size:12.60px;color:#666;font-weight:bold;transform:scaleX(0.9463);">Text</div>
</body></html>
